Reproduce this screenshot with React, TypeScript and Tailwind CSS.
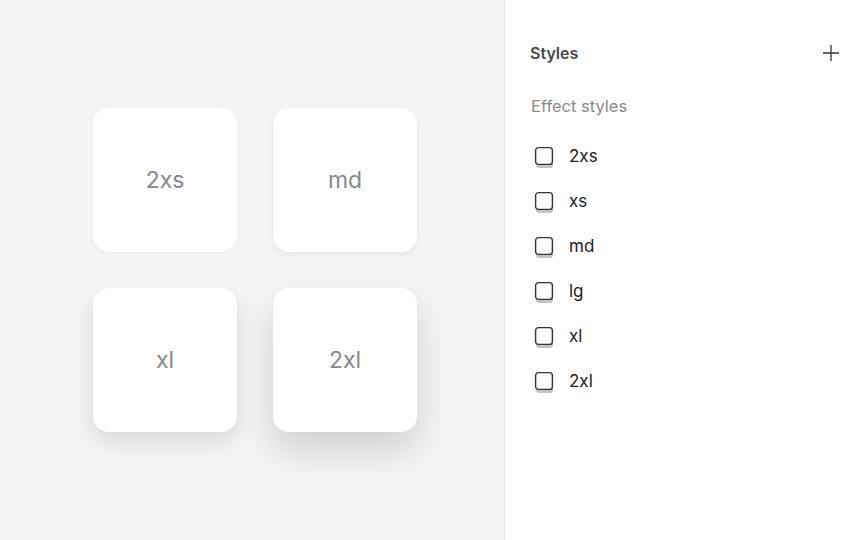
import React from "react";

const cards = [
  { label: "2xs", shadow: "shadow-[0_1px_2px_rgba(0,0,0,0.06)]" },
  { label: "md", shadow: "shadow-[0_2px_6px_rgba(0,0,0,0.07)]" },
  { label: "xl", shadow: "shadow-[0_10px_22px_rgba(0,0,0,0.11)]" },
  { label: "2xl", shadow: "shadow-[0_18px_36px_rgba(0,0,0,0.15)]" },
];

const items = ["2xs", "xs", "md", "lg", "xl", "2xl"];

function ShadowIcon() {
  return (
    <svg width="20" height="24" viewBox="0 0 20 24" className="shrink-0">
      <rect x="2" y="5" width="17" height="17" rx="3" fill="#c4c4c4" />
      <rect x="1.6" y="1.6" width="16.8" height="16.8" rx="3" fill="#ffffff" stroke="#333333" strokeWidth="1.4" />
    </svg>
  );
}

export default function App() {
  return (
    <div className="flex w-[864px] h-[540px] overflow-hidden" style={{ fontFamily: "Inter, 'Noto Sans', sans-serif" }}>
      <div className="w-[505px] h-full bg-[#f4f4f4] border-r border-[#e6e6e6] flex items-center justify-center">
        <div className="grid grid-cols-[144px_144px] gap-9 translate-x-[3px]">
          {cards.map((c) => (
            <div
              key={c.label}
              className={`w-[144px] h-[144px] bg-white rounded-[16px] flex items-center justify-center text-[23px] text-[#88888c] ${c.shadow}`}
            >
              {c.label}
            </div>
          ))}
        </div>
      </div>
      <div className="flex-1 bg-white pl-[25px] pr-[24px]">
        <div className="flex items-center justify-between h-[26px] mt-[40px]">
          <span className="text-[16px] font-semibold text-[#4a4a4a]">Styles</span>
          <svg width="18" height="18" viewBox="0 0 18 18">
            <path d="M9 1v16M1 9h16" stroke="#333" strokeWidth="1.3" />
          </svg>
        </div>
        <div className="mt-[28px] text-[16.5px] text-[#8a8a8a] pl-px">Effect styles</div>
        <div className="mt-[17px] flex flex-col">
          {items.map((it) => (
            <div key={it} className="flex items-center h-[45px] pl-[4px] gap-[15px]">
              <ShadowIcon />
              <span className="text-[17px] text-[#222] -mt-[4px]">{it}</span>
            </div>
          ))}
        </div>
      </div>
    </div>
  );
}
